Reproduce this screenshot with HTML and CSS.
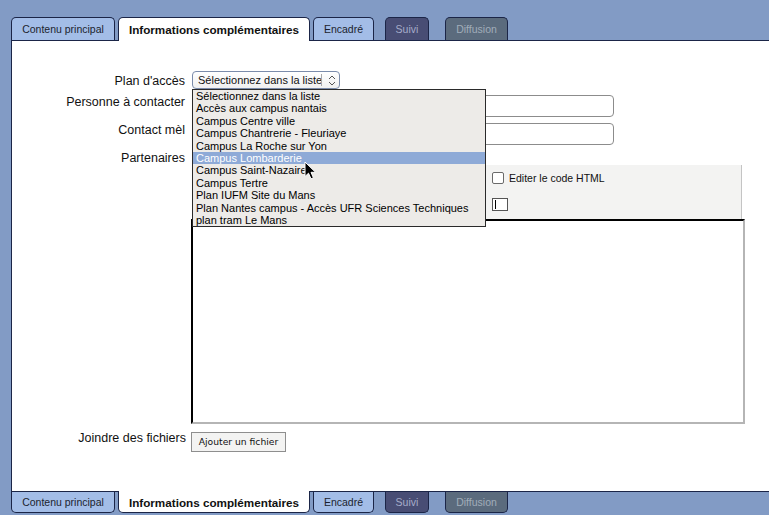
FILE: index.html
```html
<!DOCTYPE html>
<html lang="fr">
<head>
<meta charset="utf-8">
<title>Informations complémentaires</title>
<link rel="stylesheet" href="styles.css">
</head>
<body>
<div class="tabs tabs-top">
  <div class="tab tab-contenu">Contenu principal</div>
  <div class="tab tab-info active">Informations complémentaires</div>
  <div class="tab tab-encadre">Encadré</div>
  <div class="tab tab-suivi">Suivi</div>
  <div class="tab tab-diffusion">Diffusion</div>
</div>
<div class="panel">
  <div class="form">
    <div class="row row-plan">
      <label class="lbl lbl-center">Plan d'accès</label>
      <div class="selectwrap">
        <div class="select">
          <span class="select-text">Sélectionnez dans la liste</span>
          <span class="select-sep"></span>
          <svg class="select-arrows" width="8" height="11" viewBox="0 0 8 11"><path d="M1 4 L4 1 L7 4 M1 7 L4 10 L7 7" fill="none" stroke="#555" stroke-width="1"/></svg>
        </div>
        <ul class="dropdown">
          <li>Sélectionnez dans la liste</li>
          <li>Accès aux campus nantais</li>
          <li>Campus Centre ville</li>
          <li>Campus Chantrerie - Fleuriaye</li>
          <li>Campus La Roche sur Yon</li>
          <li class="hl">Campus Lombarderie</li>
          <li>Campus Saint-Nazaire</li>
          <li>Campus Tertre</li>
          <li>Plan IUFM Site du Mans</li>
          <li>Plan Nantes campus - Accès UFR Sciences Techniques</li>
          <li>plan tram Le Mans</li>
        </ul>
      </div>
    </div>
    <div class="row row-gap">
      <label class="lbl">Personne à contacter</label>
      <div class="textinput"></div>
    </div>
    <div class="row row-gap">
      <label class="lbl">Contact mèl</label>
      <div class="textinput"></div>
    </div>
    <div class="row row-gap">
      <label class="lbl">Partenaires</label>
      <div class="editor">
        <div class="toolbar">
          <div class="tb-check"><span class="checkbox"></span><span>Editer le code HTML</span></div>
          <div class="tb-mini"><span class="caret"></span></div>
        </div>
        <div class="frame"></div>
      </div>
    </div>
    <div class="row row-files">
      <label class="lbl">Joindre des fichiers</label>
      <div><button class="btn" type="button">Ajouter un fichier</button></div>
    </div>
  </div>
</div>
<div class="tabs tabs-bottom">
  <div class="tab tab-contenu">Contenu principal</div>
  <div class="tab tab-info active">Informations complémentaires</div>
  <div class="tab tab-encadre">Encadré</div>
  <div class="tab tab-suivi">Suivi</div>
  <div class="tab tab-diffusion">Diffusion</div>
</div>
<svg class="cursor" width="13" height="19" viewBox="0 0 13 19"><path d="M1 1 L1 15.5 L4.5 12.2 L7 17.8 L9.4 16.8 L7 11.3 L11.6 11.3 Z" fill="#000" stroke="#fff" stroke-width="1" stroke-linejoin="round"/></svg>
</body>
</html>
```

FILE: styles.css
```css
html, body {
  margin: 0;
  padding: 0;
}
body {
  background: #829bc5;
  font-family: "Liberation Sans", Arial, sans-serif;
  color: #111;
  width: 769px;
  height: 515px;
  overflow: hidden;
  position: relative;
}

/* Tabs */
.tabs {
  display: flex;
  align-items: flex-start;
  padding-left: 11px;
}
.tabs-top {
  padding-top: 17px;
  height: 23px;
}
.tabs-bottom {
  height: 21px;
}
.tab {
  box-sizing: border-box;
  display: flex;
  align-items: center;
  justify-content: center;
  border: 1px solid #1b2547;
  background: #a3bde7;
  color: #1b1f2e;
  font-size: 10.5px;
  white-space: nowrap;
}
.tabs-top .tab {
  height: 23px;
  border-bottom: 0;
  border-radius: 5px 5px 0 0;
}
.tabs-bottom .tab {
  height: 21px;
  border-top: 0;
  border-radius: 0 0 5px 5px;
}
.tab.active {
  background: #fff;
  font-weight: bold;
  font-size: 11.7px;
  color: #111;
  position: relative;
  z-index: 2;
}
.tabs-top .tab.active {
  height: 24px;
  padding-bottom: 1px;
}
.tabs-bottom .tab.active {
  height: 22px;
  margin-top: -1px;
  padding-top: 1px;
}
.tab-contenu { width: 104px; }
.tab-info { width: 192px; margin-left: 3px; }
.tab-encadre { width: 61px; margin-left: 3px; }
.tab-suivi {
  width: 44px;
  margin-left: 11px;
  background: #484d74;
  color: #a6acca;
}
.tab-diffusion {
  width: 63px;
  margin-left: 16px;
  background: #5b6b7d;
  color: #a1adba;
}

/* Panel */
.panel {
  margin-left: 11px;
  height: 450px;
  background: #fff;
  border-left: 1px solid #1b2547;
  border-top: 1px solid #1b2547;
  border-bottom: 1px solid #1b2547;
  position: relative;
}
.form {
  padding-top: 30px;
}
.row {
  display: grid;
  grid-template-columns: 173px auto;
  column-gap: 7px;
  align-items: start;
}
.row-plan {
  height: 18px;
  position: relative;
  z-index: 5;
}
.row-gap {
  margin-top: 6px;
}
.lbl {
  text-align: right;
  font-size: 12.5px;
  line-height: 14px;
  white-space: nowrap;
}
.lbl-center {
  align-self: center;
  padding-top: 1px;
}

/* Select */
.selectwrap {
  position: relative;
}
.select {
  box-sizing: border-box;
  width: 148px;
  height: 18px;
  border: 1px solid #7b8cab;
  border-radius: 4px;
  background: linear-gradient(#ffffff, #f0f0f0);
  display: flex;
  align-items: center;
  font-size: 11px;
  padding-left: 5px;
}
.select-text {
  width: 123px;
  white-space: nowrap;
}
.select-sep {
  width: 1px;
  height: 12px;
  background: #a8a8a8;
}
.select-arrows {
  margin-left: 6px;
}
.dropdown {
  position: absolute;
  top: 18px;
  left: 0;
  box-sizing: border-box;
  width: 294px;
  height: 138px;
  margin: 0;
  padding: 0;
  list-style: none;
  background: #edebe8;
  border: 1px solid #2a2a2a;
  font-size: 11px;
}
.dropdown li {
  line-height: 12.4px;
  height: 12.4px;
  padding-left: 3px;
  white-space: nowrap;
  color: #000;
}
.dropdown li.hl {
  background: #8eaad7;
  color: #fff;
}

/* Text inputs */
.textinput {
  box-sizing: border-box;
  width: 422px;
  height: 22px;
  border: 1px solid #8c8c8c;
  border-radius: 4px;
  background: #fff;
}

/* Editor */
.editor {
  padding-top: 14px;
}
.toolbar {
  box-sizing: border-box;
  width: 550px;
  height: 54px;
  background: #f3f3f2;
  border-right: 1px solid #c4c4c4;
  padding: 7px 0 0 300px;
  display: flex;
  flex-direction: column;
  gap: 14px;
}
.tb-check {
  display: flex;
  align-items: center;
  gap: 5px;
  font-size: 10.5px;
  height: 12px;
}
.checkbox {
  box-sizing: border-box;
  width: 12px;
  height: 12px;
  border: 1px solid #6a6a6a;
  border-radius: 2px;
  background: #fff;
}
.tb-mini {
  box-sizing: border-box;
  width: 16px;
  height: 13px;
  border: 1px solid #555;
  background: #fff;
  position: relative;
}
.caret {
  position: absolute;
  left: 2px;
  top: 1px;
  width: 1px;
  height: 9px;
  background: #000;
}
.frame {
  box-sizing: border-box;
  width: 554px;
  height: 205px;
  margin-left: -1px;
  border-style: solid;
  border-width: 2px;
  border-color: #000 #b5b5b5 #b5b5b5 #000;
  background: #fff;
}

/* Files */
.row-files {
  margin-top: 7px;
  grid-template-columns: 174px auto;
  column-gap: 5px;
}
.btn {
  box-sizing: border-box;
  height: 20px;
  width: 95px;
  padding: 0;
  border: 1px solid #8e8e8e;
  background: #f3f3f2;
  font-family: "DejaVu Sans", sans-serif;
  font-size: 9.2px;
  color: #111;
}

/* Mouse cursor overlay */
.cursor {
  position: absolute;
  left: 304px;
  top: 161px;
  z-index: 10;
}
```
